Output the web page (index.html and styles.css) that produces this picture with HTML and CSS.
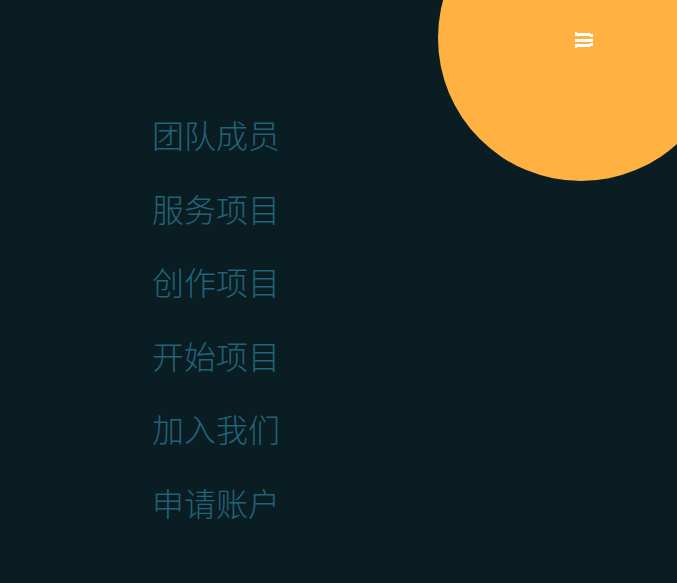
FILE: index.html
```html
<!DOCTYPE html>
<html lang="zh">
<head>
<meta charset="utf-8">
<title>菜单</title>
<link rel="stylesheet" href="styles.css">
</head>
<body>
<div class="page">
  <nav class="menu">
    <a class="menu-item" href="#">团队成员</a>
    <a class="menu-item" href="#">服务项目</a>
    <a class="menu-item" href="#">创作项目</a>
    <a class="menu-item" href="#">开始项目</a>
    <a class="menu-item" href="#">加入我们</a>
    <a class="menu-item" href="#">申请账户</a>
  </nav>
  <div class="blob">
    <button class="toggle" aria-label="菜单">
      <svg width="18" height="16" viewBox="0 0 18 16" shape-rendering="crispEdges">
        <g fill="#fff">
          <rect x="0" y="0" width="2" height="4"/>
          <rect x="2" y="1" width="13" height="3"/>
          <rect x="15" y="2" width="3" height="3"/>
          <rect x="0" y="7" width="18" height="3"/>
          <rect x="15" y="11" width="3" height="3"/>
          <rect x="2" y="12" width="13" height="3"/>
          <rect x="0" y="12" width="2" height="4"/>
        </g>
      </svg>
    </button>
  </div>
</div>
</body>
</html>
```
FILE: styles.css
```css
html, body {
  margin: 0;
  padding: 0;
}
body {
  background: #0a1d23;
  font-family: "Noto Sans CJK SC", "Noto Sans", sans-serif;
  overflow: hidden;
}
.page {
  position: relative;
  width: 677px;
  height: 583px;
  overflow: hidden;
}
.menu {
  display: flex;
  flex-direction: column;
  align-items: center;
  width: 132px;
  margin-left: 150px;
  padding-top: 98px;
}
.menu-item {
  display: block;
  font-size: 32px;
  font-weight: 300;
  line-height: 73.5px;
  color: #22637a;
  text-decoration: none;
  white-space: nowrap;
}
.blob {
  position: absolute;
  left: 438px;
  top: -105px;
  width: 286px;
  height: 286px;
  border-radius: 50%;
  background: #ffb142;
}
.toggle {
  position: absolute;
  left: 137px;
  top: 137px;
  width: 18px;
  height: 16px;
  padding: 0;
  border: 0;
  background: none;
  display: flex;
}
```
